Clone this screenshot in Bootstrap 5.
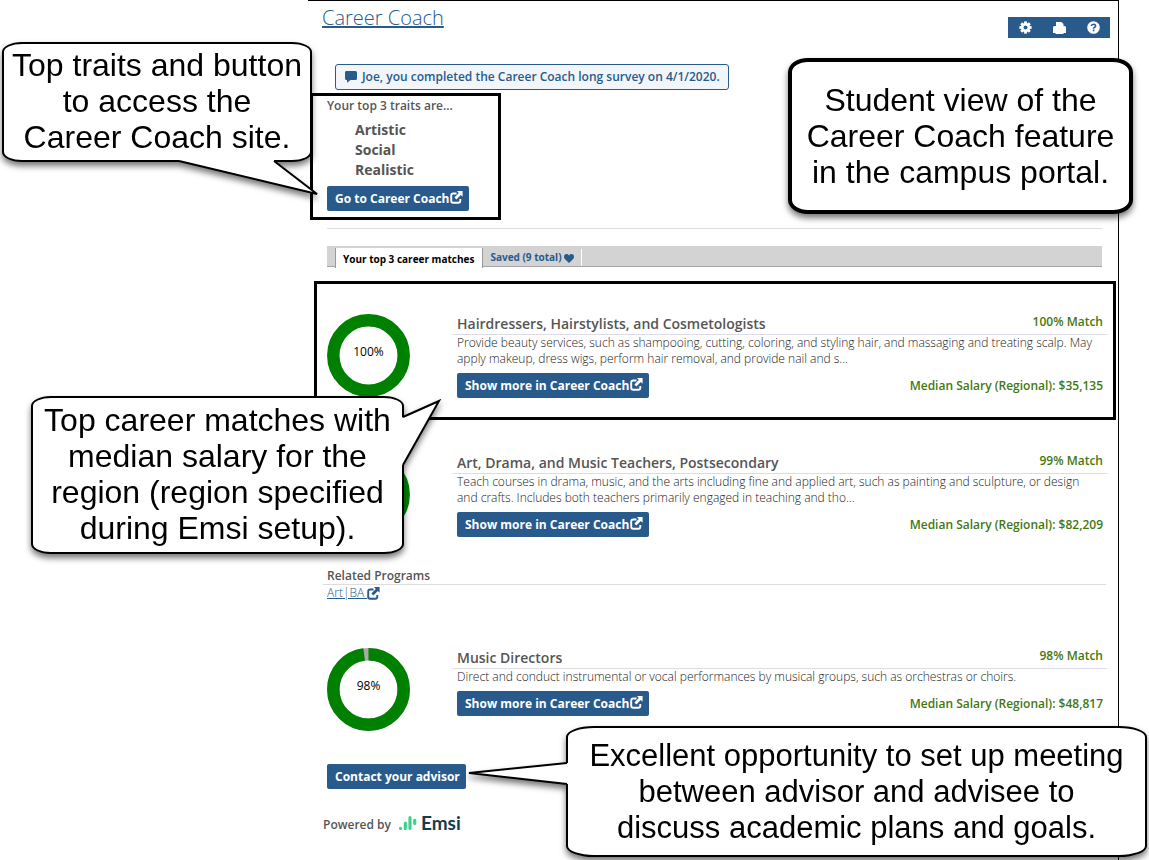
<!DOCTYPE html>
<html lang="en">
<head>
<meta charset="utf-8">
<meta name="viewport" content="width=device-width, initial-scale=1">
<title>Career Coach</title>
<link href="https://cdn.jsdelivr.net/npm/bootstrap@5.3.0/dist/css/bootstrap.min.css" rel="stylesheet">
<style>
  :root { --portal-blue: #285b8c; --ink: #555; --match: #437810; }
  body { font-family: "Open Sans", sans-serif; font-size: 12px; line-height: 16px; color: var(--ink); background: #fff; }
  .guide { min-height: 860px; overflow: hidden; }
  .portal { margin-left: 308px; margin-right: 30px; border-top: 1px solid #000; border-right: 1px solid #000; min-height: 860px; }
  .portal a { color: var(--portal-blue); }
  .page-title { font-size: 20px; line-height: 28px; font-weight: 300; margin: 3px 0 0 14px; }
  .tools { background: var(--portal-blue); margin: 16px 8px 0 0; height: 21px; }
  .tools button { width: 34px; height: 21px; padding: 0; border: 0; background: none; color: #fff; display: flex; align-items: center; justify-content: center; }
  .notice { color: var(--portal-blue); background: #f2f6fb; border: 1px solid var(--portal-blue); border-radius: 3px; font-weight: 600; height: 26px; padding: 0 8px; margin: 26px 0 3px 27px; }
  .outlined { border: 3px solid #000; }
  .traits { width: 191px; height: 127px; margin-left: 2px; padding: 1px 14px; }
  .traits h2 { font-size: 12px; line-height: 18px; font-weight: 600; margin: 0 0 5px; }
  .traits li { font-size: 14px; line-height: 20px; font-weight: 700; padding-left: 28px; }
  .btn-portal { --bs-btn-color: #fff; --bs-btn-bg: var(--portal-blue); --bs-btn-hover-color: #fff; --bs-btn-hover-bg: #1d4770; font-size: 12px; line-height: 16px; font-weight: 700; border: 0; border-radius: 2px; height: 25px; padding: 0 6px 0 8px; display: inline-flex; align-items: center; gap: 1px; white-space: nowrap; }
  .btn-portal svg { margin-bottom: 2px; }
  .traits .btn-portal { margin-top: 6px; }
  .divider { height: 1px; background: #ddd; margin: 8px 16px 17px 19px; }
  .tabs { height: 21px; background: #d3d3d3; border-bottom: 1px solid #a5a5a5; margin: 0 16px 14px 19px; padding-left: 8px; font-size: 10px; line-height: 14px; }
  .tabs button { border: 0; background: none; padding: 0 7px 1px; font-weight: 700; color: var(--portal-blue); height: 17px; border-right: 1px solid #fff; margin-top: 3px; }
  .tabs button.active { background: #fff; color: #000; height: 20px; margin-top: 2px; padding: 1px 8px 0 7px; border-left: 1px solid #999; border-right: 1px solid #999; }
  .match { border: 3px solid transparent; min-height: 139px; margin: 0 2px 0 6px; padding: 30px 6px 0 10px; }
  .match.outlined { border-color: #000; }
  .ring { width: 83px; height: 83px; flex: none; }
  .ring span { position: absolute; inset: 0 0 8px; display: flex; align-items: center; justify-content: center; color: #000; }
  .match-body { margin-left: 43px; flex: 1; }
  .match-head { border-bottom: 1px solid #dcdce6; padding: 0 4px; height: 21px; }
  .match-head h3 { font-size: 14px; line-height: 18px; font-weight: 600; margin: 1px 0 0; }
  .score { color: var(--match); font-weight: 600; }
  .blurb { color: #222; font-weight: 300; margin: 0 8px 6px 4px; }
  .match-foot { padding: 0 4px; }
  .related { margin: 8px 12px 0 15px; height: 48px; }
  .related h3 { font-size: 12px; line-height: 17px; font-weight: 600; margin: 0; padding: 0 4px; border-bottom: 1px solid #ddd; }
  .related a { padding-left: 4px; font-weight: 300; }
  .related svg { color: var(--portal-blue); }
  .portal-foot { padding: 10px 0 0 15px; }
  .powered { margin-top: 22px; }
  .powered-label { padding-top: 4px; }
  .emsi { font: 700 19px/24px Lato, sans-serif; color: #153b4c; }
  .callout { position: absolute; z-index: 2; display: flex; align-items: center; justify-content: center; text-align: center; background: #fff; border: 2px solid #000; border-radius: 20px / 10px; padding-bottom: 2px; font: 32px/36px "Liberation Sans", sans-serif; color: #000; filter: drop-shadow(0 4px 3px #0008); }
  .callout p { margin: 0; white-space: nowrap; }
  .callout svg { position: absolute; overflow: visible; }
  .c-traits { left: 2px; top: 42px; width: 310px; height: 120px; }
  .c-view { right: 16px; top: 58px; width: 345px; height: 156px; padding: 0; border-width: 4px; border-radius: 20px / 14px; }
  .c-matches { left: 31px; top: 396px; width: 373px; height: 158px; }
  .c-advisor { right: 2px; top: 726px; width: 581px; height: 131px; padding: 0; border-radius: 28px / 11px; font-size: 31px; }
</style>
</head>
<body>
<svg width="0" height="0" class="position-absolute" aria-hidden="true">
  <symbol id="ext" viewBox="0 0 13 13"><path d="M6.500 2.500H3.200Q1.200 2.500 1.200 4.500V9.800Q1.200 11.800 3.200 11.800H8.300Q10.300 11.800 10.300 9.800V8" fill="none" stroke="currentColor" stroke-width="1.900"/><path d="M7 0H12.600V5.800L10.800 4 6.400 8.400 4.400 6.400 8.800 2Z" fill="currentColor"/></symbol>
</svg>
<div class="guide position-relative">
  <main class="portal">
    <header class="d-flex justify-content-between align-items-start">
      <h1 class="page-title"><a href="#coach">Career Coach</a></h1>
      <div class="tools d-flex" role="toolbar" aria-label="Page tools">
        <button type="button" aria-label="Settings"><svg width="13" height="13" viewBox="-7 -7 14 14"><g fill="currentColor"><path id="t" d="M-1.500-6.600h3V6.600h-3Z"/><use href="#t" transform="rotate(45)"/><use href="#t" transform="rotate(90)"/><use href="#t" transform="rotate(135)"/><circle r="4.900"/></g><circle r="2.100" fill="#285b8c"/></svg></button>
        <button type="button" aria-label="Print"><svg width="13" height="12" viewBox="0 0 13 12"><path d="M3 0H8.500L10.500 2V4H11.500Q13 4 13 5.500V11H10.500V12H2.500V11H0V5.500Q0 4 1.500 4H3Z" fill="currentColor"/></svg></button>
        <button type="button" aria-label="Help"><svg width="13" height="13" viewBox="0 0 13 13"><circle cx="6.500" cy="6.500" r="6.300" fill="currentColor"/><path d="M4.400 5Q4.600 3.200 6.500 3.200T8.600 4.900Q8.600 5.800 7.500 6.400Q6.600 6.900 6.600 7.700M6.600 8.600V10.200" fill="none" stroke="#285b8c" stroke-width="1.600"/></svg></button>
      </div>
    </header>

    <div class="notice d-inline-flex align-items-center" role="status">
      <svg class="me-1" width="14" height="12" viewBox="0 0 14 12" aria-hidden="true"><path d="M2 0H11.500Q13 0 13 1.500V7.500Q13 9 11.500 9H6.500L3 11.800V9H2.500Q1 9 1 7.500V1.500Q1 0 2 0Z" fill="currentColor"/></svg>
      Joe, you completed the Career Coach long survey on 4/1/2020.
    </div>

    <section class="traits outlined">
      <h2>Your top 3 traits are...</h2>
      <ul class="list-unstyled mb-0"><li>Artistic</li><li>Social</li><li>Realistic</li></ul>
      <button type="button" class="btn btn-portal">Go to Career Coach <svg width="13" height="13" aria-hidden="true"><use href="#ext"/></svg></button>
    </section>

    <div class="divider"></div>

    <div class="tabs d-flex align-items-start" role="tablist">
      <button type="button" class="active" role="tab" aria-selected="true">Your top 3 career matches</button>
      <button type="button" role="tab" aria-selected="false">Saved (9 total) <svg width="10" height="9" viewBox="0 0 10 9" aria-hidden="true"><path d="M5 9 .8 5Q0 4 0 2.700 0 0 2.600 0 4 0 5 1.400 6 0 7.400 0 10 0 10 2.700 10 4 9.200 5Z" fill="currentColor"/></svg></button>
    </div>

    <article class="match outlined d-flex align-items-start">
      <div class="ring position-relative">
        <svg class="d-block" width="83" height="83" viewBox="0 0 83 83" aria-hidden="true"><circle cx="41.500" cy="41.500" r="35.200" fill="none" stroke="#008000" stroke-width="12.500"/></svg>
        <span>100%</span>
      </div>
      <div class="match-body">
        <div class="match-head d-flex justify-content-between"><h3>Hairdressers, Hairstylists, and Cosmetologists</h3><span class="score">100% Match</span></div>
        <p class="blurb">Provide beauty services, such as shampooing, cutting, coloring, and styling hair, and massaging and treating scalp. May apply makeup, dress wigs, perform hair removal, and provide nail and s...</p>
        <div class="match-foot d-flex justify-content-between align-items-center">
          <button type="button" class="btn btn-portal">Show more in Career Coach <svg width="13" height="13" aria-hidden="true"><use href="#ext"/></svg></button>
          <span class="score">Median Salary (Regional): $35,135</span>
        </div>
      </div>
    </article>

    <article class="match d-flex align-items-start">
      <div class="ring position-relative">
        <svg class="d-block" width="83" height="83" viewBox="0 0 83 83" aria-hidden="true"><circle cx="41.500" cy="41.500" r="35.200" fill="none" stroke="#008000" stroke-width="12.500"/></svg>
      </div>
      <div class="match-body">
        <div class="match-head d-flex justify-content-between"><h3>Art, Drama, and Music Teachers, Postsecondary</h3><span class="score">99% Match</span></div>
        <p class="blurb">Teach courses in drama, music, and the arts including fine and applied art, such as painting and sculpture, or design and crafts. Includes both teachers primarily engaged in teaching and tho...</p>
        <div class="match-foot d-flex justify-content-between align-items-center">
          <button type="button" class="btn btn-portal">Show more in Career Coach <svg width="13" height="13" aria-hidden="true"><use href="#ext"/></svg></button>
          <span class="score">Median Salary (Regional): $82,209</span>
        </div>
      </div>
    </article>

    <section class="related">
      <h3>Related Programs</h3>
      <a href="#art-ba">Art|BA&nbsp;</a><svg class="align-text-bottom" width="13" height="15" aria-hidden="true"><use href="#ext"/></svg>
    </section>

    <article class="match d-flex align-items-start">
      <div class="ring position-relative">
        <svg class="d-block" width="83" height="83" viewBox="0 0 83 83" aria-hidden="true"><g fill="none" stroke-width="12.500" transform="rotate(-90 41.500 41.500)"><circle cx="41.500" cy="41.500" r="35.200" stroke="#a9a9a9"/><circle cx="41.500" cy="41.500" r="35.200" stroke="#008000" pathLength="100" stroke-dasharray="98 2"/></g></svg>
        <span>98%</span>
      </div>
      <div class="match-body">
        <div class="match-head d-flex justify-content-between"><h3>Music Directors</h3><span class="score">98% Match</span></div>
        <p class="blurb">Direct and conduct instrumental or vocal performances by musical groups, such as orchestras or choirs.</p>
        <div class="match-foot d-flex justify-content-between align-items-center">
          <button type="button" class="btn btn-portal">Show more in Career Coach <svg width="13" height="13" aria-hidden="true"><use href="#ext"/></svg></button>
          <span class="score">Median Salary (Regional): $48,817</span>
        </div>
      </div>
    </article>

    <footer class="portal-foot">
      <button type="button" class="btn btn-portal ms-1">Contact your advisor</button>
      <div class="powered d-flex align-items-center fw-semibold"><span class="powered-label">Powered by</span>
        <svg class="ms-2 me-1" width="18" height="16" viewBox="0 0 20 16" aria-hidden="true"><g stroke="#3bd18b" stroke-width="3.500" stroke-linecap="round"><path d="M1.700 14V14.100M7 8V14M12.200 2V14M17.500 5V8.500"/></g></svg>
        <span class="emsi">Emsi</span>
      </div>
    </footer>
  </main>

  <aside class="callout c-traits"><p>Top traits and button<br>to access the<br>Career Coach site.</p>
    <svg width="310" height="160" viewBox="0 0 310 160" style="left:-2px;top:-2px" aria-hidden="true"><path d="M177 117V119.500L315 152 272 119V117Z" fill="#fff"/><path d="M177 119 315 152 272 119" fill="none" stroke="#000" stroke-width="2"/></svg>
  </aside>
  <aside class="callout c-view"><p>Student view of the<br>Career Coach feature<br>in the campus portal.</p></aside>
  <aside class="callout c-matches"><p>Top career matches with<br>median salary for the<br>region (region specified<br>during Emsi setup).</p>
    <svg width="410" height="158" viewBox="0 0 410 158" style="left:-2px;top:-2px" aria-hidden="true"><path d="M370 22 408 5 372 69H370Z" fill="#fff"/><path d="M372 21 408 5 372 69" fill="none" stroke="#000" stroke-width="2"/></svg>
  </aside>
  <aside class="callout c-advisor"><p>Excellent opportunity to set up meeting<br>between advisor and advisee to<br>discuss academic plans and goals.</p>
    <svg width="100" height="100" viewBox="-100 0 100 100" style="left:-102px;top:-2px" aria-hidden="true"><path d="M2.500 37H1L-97 47 1 58H2.500Z" fill="#fff"/><path d="M1 37-97 47 1 58" fill="none" stroke="#000" stroke-width="2"/></svg>
  </aside>
</div>
<script src="https://cdn.jsdelivr.net/npm/bootstrap@5.3.0/dist/js/bootstrap.bundle.min.js"></script>
</body>
</html>
